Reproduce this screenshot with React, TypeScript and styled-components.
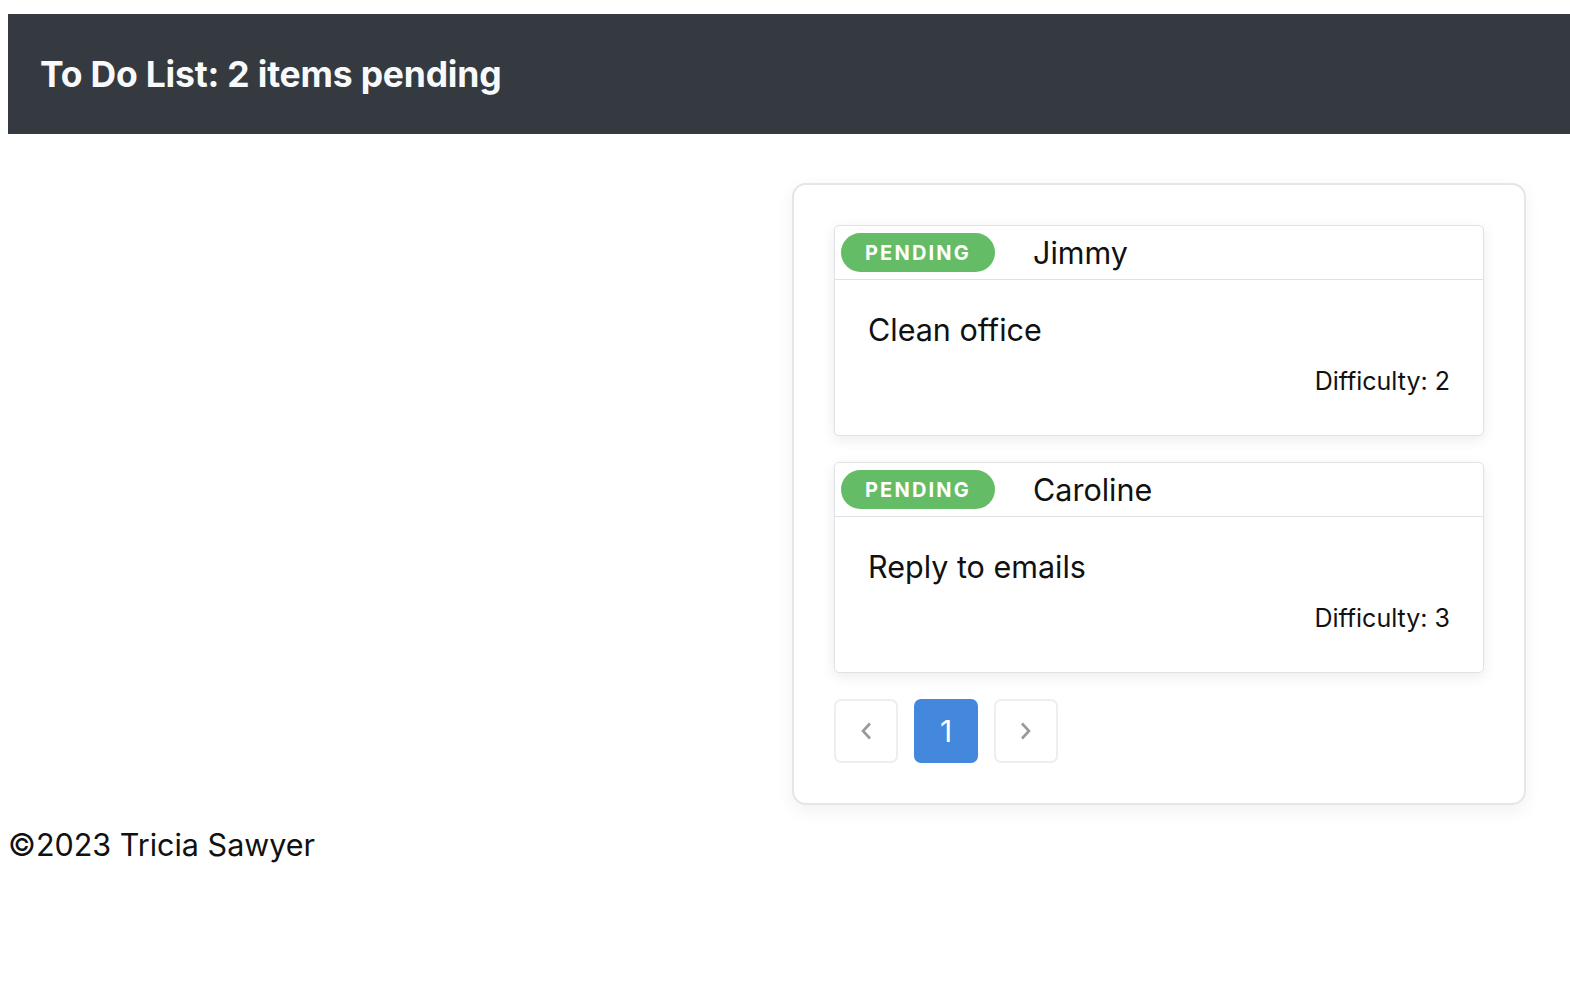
import React from "react";
import styled, { createGlobalStyle } from "styled-components";

const GlobalStyle = createGlobalStyle`
  html, body { margin: 0; padding: 0; background: #ffffff; }
  body { font-family: Inter, "Noto Sans", "Liberation Sans", sans-serif; color: #000; }
  *, *::before, *::after { box-sizing: border-box; }
`;

const Page = styled.div`
  padding: 14px 0 0 8px;
  display: flex;
  flex-direction: column;
`;

const Header = styled.header`
  background: #343a40;
  height: 120px;
  display: flex;
  align-items: center;
  padding-left: 32px;
`;

const Title = styled.h1`
  margin: 0;
  color: #f8f9fa;
  font-size: 35.5px;
  font-weight: 700;
  letter-spacing: -0.2px;
`;

const Main = styled.main`
  display: grid;
  grid-template-columns: 784px 734px;
  padding-top: 49px;
`;

const Panel = styled.section`
  grid-column: 2;
  border: 2px solid #e3e6ea;
  border-radius: 14px;
  padding: 40px;
  display: flex;
  flex-direction: column;
  gap: 26px;
  box-shadow: 0 6px 18px rgba(0, 0, 0, 0.06);
  background: #fff;
`;

const ItemCard = styled.article`
  border: 1.5px solid #dee2e6;
  border-radius: 5px;
  background: #fff;
  box-shadow: 0 4px 14px rgba(0, 0, 0, 0.08);
  display: flex;
  flex-direction: column;
`;

const ItemHeader = styled.div`
  height: 54px;
  display: flex;
  align-items: center;
  padding-left: 6px;
  gap: 38px;
  border-bottom: 1.5px solid #dee2e6;
`;

const Badge = styled.span`
  width: 154px;
  height: 39px;
  border-radius: 20px;
  background: #64bd66;
  color: #fff;
  font-size: 20px;
  font-weight: 700;
  letter-spacing: 2.2px;
  display: flex;
  align-items: center;
  justify-content: center;
`;

const Assignee = styled.span`
  font-size: 30.5px;
  color: #111;
`;

const ItemBody = styled.div`
  padding: 28px 33px 37px 33px;
  display: flex;
  flex-direction: column;
`;

const Task = styled.p`
  margin: 0;
  font-size: 30.5px;
  line-height: 44px;
  color: #111;
`;

const Difficulty = styled.p`
  margin: 12px 0 0 0;
  font-size: 25px;
  line-height: 34px;
  text-align: right;
  color: #111;
`;

const Pager = styled.nav`
  display: flex;
  gap: 16px;
`;

const PageButton = styled.button<{ $active?: boolean }>`
  width: 64px;
  height: 64px;
  border-radius: 7px;
  border: ${(p) => (p.$active ? "none" : "2px solid #eceeef")};
  background: ${(p) => (p.$active ? "#4488dd" : "#fff")};
  color: ${(p) => (p.$active ? "#fff" : "#999")};
  font-family: inherit;
  font-size: 30px;
  display: flex;
  align-items: center;
  justify-content: center;
  padding: 0;
`;

const Footer = styled.footer`
  margin-top: 20px;
  font-size: 30.5px;
  line-height: 40px;
  color: #111;
`;

const Chevron = ({ dir }: { dir: "left" | "right" }) => (
  <svg width="14" height="20" viewBox="0 0 14 20" fill="none">
    <path
      d={dir === "left" ? "M11 2.5 L4 10 L11 17.5" : "M3 2.5 L10 10 L3 17.5"}
      stroke="#999"
      strokeWidth="2.6"
      strokeLinecap="butt"
      strokeLinejoin="miter"
    />
  </svg>
);

const items = [
  { who: "Jimmy", text: "Clean office", difficulty: 2 },
  { who: "Caroline", text: "Reply to emails", difficulty: 3 },
];

export default function App() {
  return (
    <>
      <GlobalStyle />
      <Page>
        <Header>
          <Title>To Do List: 2 items pending</Title>
        </Header>
        <Main>
          <Panel>
            {items.map((it) => (
              <ItemCard key={it.who}>
                <ItemHeader>
                  <Badge>PENDING</Badge>
                  <Assignee>{it.who}</Assignee>
                </ItemHeader>
                <ItemBody>
                  <Task>{it.text}</Task>
                  <Difficulty>Difficulty: {it.difficulty}</Difficulty>
                </ItemBody>
              </ItemCard>
            ))}
            <Pager>
              <PageButton aria-label="previous">
                <Chevron dir="left" />
              </PageButton>
              <PageButton $active>1</PageButton>
              <PageButton aria-label="next">
                <Chevron dir="right" />
              </PageButton>
            </Pager>
          </Panel>
        </Main>
        <Footer>©2023 Tricia Sawyer</Footer>
      </Page>
    </>
  );
}
